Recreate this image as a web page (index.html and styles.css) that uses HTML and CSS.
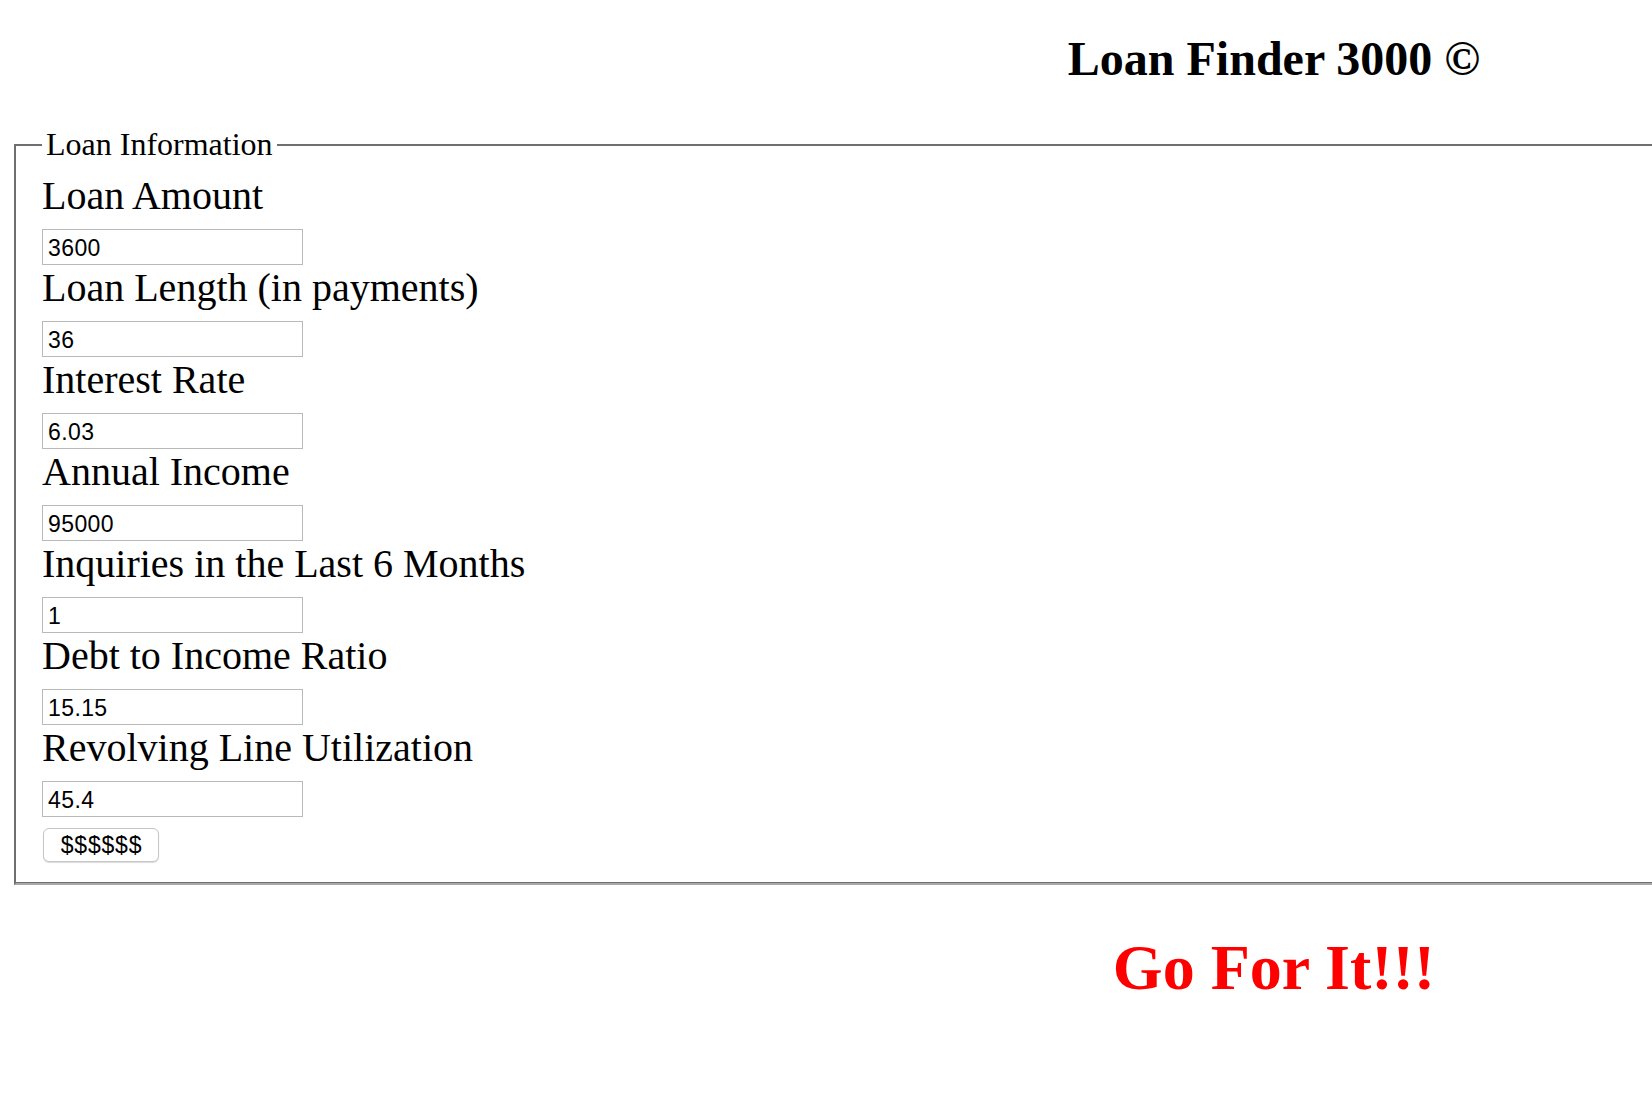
FILE: index.html
```html
<!DOCTYPE html>
<html lang="en">
<head>
<meta charset="utf-8">
<title>Loan Finder 3000</title>
<link rel="stylesheet" href="styles.css">
</head>
<body>
<div class="viewport">
  <div class="page">
    <h2 class="title">Loan Finder 3000 &copy;</h2>
    <form class="loan-form">
      <fieldset class="loan">
        <legend class="loan-legend">Loan Information</legend>
        <div class="fields">
          <div class="field">
            <label class="field-label" for="amount">Loan Amount</label>
            <input class="field-input" id="amount" type="text" value="3600">
          </div>
          <div class="field">
            <label class="field-label" for="length">Loan Length (in payments)</label>
            <input class="field-input" id="length" type="text" value="36">
          </div>
          <div class="field">
            <label class="field-label" for="rate">Interest Rate</label>
            <input class="field-input" id="rate" type="text" value="6.03">
          </div>
          <div class="field">
            <label class="field-label" for="income">Annual Income</label>
            <input class="field-input" id="income" type="text" value="95000">
          </div>
          <div class="field">
            <label class="field-label" for="inquiries">Inquiries in the Last 6 Months</label>
            <input class="field-input" id="inquiries" type="text" value="1">
          </div>
          <div class="field">
            <label class="field-label" for="dti">Debt to Income Ratio</label>
            <input class="field-input" id="dti" type="text" value="15.15">
          </div>
          <div class="field">
            <label class="field-label" for="revol">Revolving Line Utilization</label>
            <input class="field-input" id="revol" type="text" value="45.4">
          </div>
          <button class="submit" type="button">$$$$$$</button>
        </div>
      </fieldset>
    </form>
    <h1 class="verdict">Go For It!!!</h1>
  </div>
</div>
</body>
</html>
```

FILE: styles.css
```css
html, body {
  margin: 0;
  padding: 0;
  background: #ffffff;
}

body {
  font-family: "Liberation Serif", "Times New Roman", serif;
  color: #000000;
}

.viewport {
  width: 100%;
  overflow: hidden;
}

.page {
  width: 2520px;
  padding-left: 14px;
}

.title {
  margin: 32px 0 41px;
  font-size: 48px;
  line-height: 53px;
  font-weight: bold;
  text-align: center;
}

.loan-form {
  margin: 0;
}

.loan {
  margin: 0;
  min-width: 0;
  border-style: solid;
  border-width: 2px;
  border-color: #6f6f6f #a8a8a8 #a8a8a8 #6f6f6f;
  box-shadow: inset 0 -1px 0 #6f6f6f;
  padding: 10px 24px 21px 26px;
}

.loan-legend {
  font-size: 32px;
  line-height: 37px;
  padding: 0 4px;
}

.fields {
  display: flex;
  flex-direction: column;
  align-items: flex-start;
}

.field {
  display: flex;
  flex-direction: column;
  align-items: flex-start;
}

.field-label {
  display: block;
  font-size: 40px;
  line-height: 46px;
  margin-bottom: 10px;
  white-space: nowrap;
}

.field-input {
  display: block;
  box-sizing: border-box;
  width: 261px;
  height: 36px;
  margin: 0;
  padding: 3px 4px 0 5px;
  border: 1px solid #b9b9b9;
  border-radius: 0;
  background: #ffffff;
  font-family: "Liberation Sans", Arial, sans-serif;
  font-size: 23px;
  letter-spacing: 0.4px;
  color: #000000;
  outline: none;
}

.submit {
  box-sizing: border-box;
  margin-top: 11px;
  margin-left: 1px;
  width: 116px;
  height: 34px;
  padding: 0 0 0 1px;
  border: 1px solid #c6c6c6;
  border-radius: 6px;
  background: #ffffff;
  box-shadow: 0 1px 1px rgba(0, 0, 0, 0.14);
  font-family: "Liberation Sans", Arial, sans-serif;
  font-size: 23px;
  letter-spacing: 0.8px;
  color: #000000;
}

.verdict {
  margin: 47px 0 40px;
  font-size: 64px;
  line-height: 71px;
  font-weight: bold;
  color: #ff0000;
  text-align: center;
}
```
